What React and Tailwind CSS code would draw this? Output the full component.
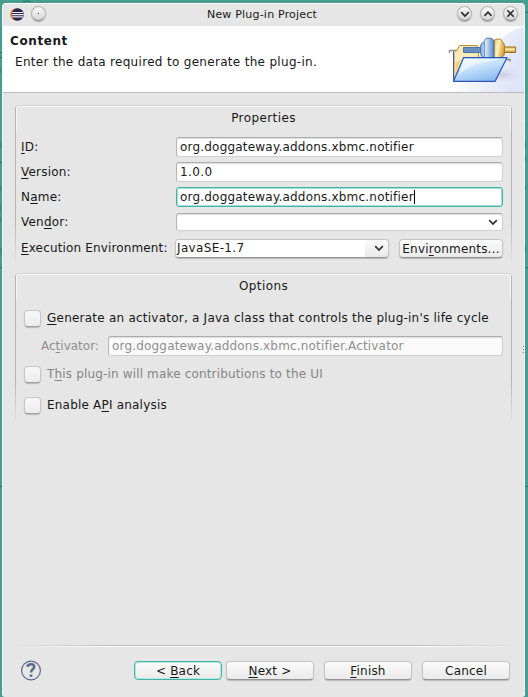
import React from 'react';

const U = ({ children }) => (
  <span className="underline decoration-1 underline-offset-2">{children}</span>
);

const Chevron = ({ up, className = '' }) => (
  <svg className={className} width="10" height="8" viewBox="0 0 10 8" fill="none">
    <path d={up ? 'M1.5 5.8 5 2.2l3.5 3.6' : 'M1.2 2.2 5 6l3.8-3.8'} stroke="#303030" strokeWidth="1.7" />
  </svg>
);

const Round = ({ children }) => (
  <span className="flex h-[15px] w-[15px] items-center justify-center rounded-full border border-[#b4b4b4] border-b-[#8e8e8e] bg-linear-to-b from-[#fafafa] to-[#d6d6d6] shadow-[0_1px_1px_#aaa]">
    {children}
  </span>
);

const field =
  'flex h-5 w-[327px] items-center whitespace-nowrap rounded-[3px] border border-[#d0d0d0] border-t-[#adadad] border-l-[#b5b5b5] bg-white pl-[3px] shadow-[inset_0_1px_1px_#ddd]';
const raised =
  'flex items-center justify-center whitespace-nowrap rounded-[4px] border border-[#c4c4c4] border-b-[#929292] bg-linear-to-b from-[#fbfbfb] to-[#eaeaea] shadow-[0_1px_1px_#b8b8b8]';

const Row = ({ label, className = '', children }) => (
  <div className={`flex h-5 items-center ${className}`}>
    <span className="w-[155px] shrink-0 whitespace-nowrap">{label}</span>
    {children}
  </div>
);

// Group frame whose side edges fade out towards the bottom.
const Group = ({ title, className, children }) => (
  <section className={`relative left-[-1px] ml-[13px] w-[497px] ${className}`}>
    <div className="absolute inset-0 rounded-t-[4px] border-x border-t border-x-[#b4b4b4] border-t-[#d2d2d2] mask-b-from-70% shadow-[inset_0_1px_0_#fafafa]" />
    <div className="absolute top-[2px] left-px h-[24px] w-[495px] border-x border-[#f7f7f7]" />
    <div className="relative">
      <h2 className="flex h-[25px] items-center justify-center pt-px text-center tracking-[0.4px]">{title}</h2>
      {children}
    </div>
  </section>
);

const Check = ({ children, className = '' }) => (
  <label className={`ml-[9px] flex h-[17px] items-center whitespace-nowrap ${className}`}>
    <span className="mr-[6px] h-[17px] w-[17px] rounded-[4px] border border-[#c6c6c6] border-b-[#a0a0a0] bg-linear-to-b from-[#f8f8f8] to-[#ececec] shadow-[0_1px_1px_#bbb]" />
    <span className="relative -top-px">{children}</span>
  </label>
);

const FolderPlug = () => (
  <svg width="80" height="66" viewBox="0 0 80 66">
    <defs>
      <linearGradient id="sky" x1="0" x2="1" y1="0" y2=".3">
        <stop offset=".2" stopColor="#fff" /><stop offset="1" stopColor="#dfe5f8" />
      </linearGradient>
      <linearGradient id="front" x1="0" x2=".5" y1="0" y2="1">
        <stop stopColor="#f0faff" /><stop offset=".5" stopColor="#c5e2fb" /><stop offset="1" stopColor="#8fbdf2" />
      </linearGradient>
      <linearGradient id="gold" x1="0" x2="1" y1="0" y2=".3">
        <stop stopColor="#e6bb58" /><stop offset=".45" stopColor="#fff3bd" /><stop offset="1" stopColor="#d3a23c" />
      </linearGradient>
      <linearGradient id="rod" x1="0" x2="0" y1="0" y2="1">
        <stop stopColor="#e0b65a" /><stop offset=".45" stopColor="#fbe9a8" /><stop offset="1" stopColor="#c08e2c" />
      </linearGradient>
      <linearGradient id="steel" x1="0" x2="1" y1="0" y2="0">
        <stop stopColor="#7fa5d3" /><stop offset=".4" stopColor="#d3e6f6" /><stop offset="1" stopColor="#5b86be" />
      </linearGradient>
      <radialGradient id="shade"><stop stopColor="#b8b3ce" stopOpacity=".6" /><stop offset="1" stopColor="#d5d8ed" stopOpacity="0" /></radialGradient>
    </defs>
    <path d="M80 1C66 4 57 12 46 21 31 32 20 49 10 66H80Z" fill="url(#sky)" />
    <ellipse cx="59" cy="49" rx="17" ry="8" fill="url(#shade)" />
    <path d="M5 24.500h7M5.500 24v3M62 33.500h4v2M16 33.500h3" stroke="#888b96" strokeWidth="1.4" fill="none" />
    <path d="M9.500 55V25h3l3-5.500h18l1 2v32Z" fill="#fbe9b8" stroke="#b58b36" />
    <path d="M9.700 55V26" stroke="#45558f" strokeWidth="1.2" />
    <path d="M11.500 49V37l5-3Z" fill="#f9cf75" />
    <path d="M19.500 21.500h17v5h-17Z" fill="#6b90c4" stroke="#4a72ac" />
    <path d="M59.500 21h12v5.500h-12Z" fill="url(#rod)" stroke="#9d6b16" />
    <path d="M50 14.500q1-1.500 4-1.500t4 1.700v1.500q2.500.3 2.500 4v7q0 3-2.500 3.600V32h-8Z" fill="url(#gold)" stroke="#b07d1b" />
    <path d="M36.500 21.500q0-5 3.500-5 .3-4.500 4.700-4.500t5.300 3V32h-9.500q-4-1-4-5Z" fill="url(#steel)" stroke="#4a77b3" />
    <path d="M40.500 17v14" stroke="#5b86be" strokeWidth=".8" />
    <path d="M19.500 31.700H63L51 55.300H9.500Z" fill="url(#front)" stroke="#2855b6" strokeWidth="1.2" />
    <path d="M20.500 33h39C44 35 22 38 14 51Z" fill="#fff" opacity=".5" />
  </svg>
);

const wizardButton = `${raised} h-[19px] w-[88px]`;

export default function App() {
  return (
    <div className="relative h-[697px] w-[528px] overflow-hidden bg-[#469e91] pt-[3px] pl-[2px] font-['DejaVu_Sans',sans-serif] text-[12px] leading-[16px] tracking-[0.2px] text-[#181818]">
      {/* Slivers of the window behind the dialog */}
      <svg className="absolute top-0 left-0" width="528" height="697" stroke="#23776c">
        <path d="M0 52.500h2M0 57.500h2M0 162.500h2M0 267.500h2M0 486.500h2M525 12.500h3M525 125.500h1M525 267.500h3M525 486.500h3M23 2.500l4-2 4 2" fill="none" />
        <path d="M1 68v5M1 142v6M1 186v5M1 205v6M1 217v5M1 248v7M525.500 142v7M525.500 157v4M525.500 186v3M525.500 246v7" opacity=".7" />
      </svg>
      <main className="relative flex h-[694px] w-[523px] flex-col rounded-t-[4px] rounded-b-[3px] border border-t-white border-r-[#f8f8f8] border-b-[#e6e6e6] border-l-[#f5f5f5] bg-[#e6e6e6]">
        <header className="flex h-[22px] shrink-0 items-center pr-[6px] pl-[7px] text-[11px]">
          <svg width="14" height="14" viewBox="0 0 14 14">
            <circle cx="6.3" cy="6.5" r="6.2" fill="#f59222" />
            <circle cx="7.6" cy="6.5" r="6.2" fill="#2c2255" />
            <path d="M2 4.500h11M1.600 6.700h12M2 8.900h11" stroke="#eee" strokeWidth="1.2" />
          </svg>
          <span className="mb-[3px] ml-[7px]"><Round><i className="h-px w-px bg-[#333]" /></Round></span>
          <h1 className="flex-1 pl-[21px] text-center">New Plug-in Project</h1>
          <div className="mb-[3px] flex gap-2">
            <Round><Chevron /></Round>
            <Round><Chevron up /></Round>
            <Round>
              <svg width="9" height="9" viewBox="0 0 9 9"><path d="m1.3 1.3 6.4 6.4m0-6.4L1.3 7.7" stroke="#303030" strokeWidth="1.6" /></svg>
            </Round>
          </div>
        </header>
        <div className="flex h-[67px] shrink-0 justify-between border-b border-[#bdbdbd] bg-white">
          <div className="pt-[7px] pl-[7px]">
            <h2 className="font-bold tracking-[0.6px]">Content</h2>
            <p className="mt-[5px] ml-[5px] tracking-[0.31px]">Enter the data required to generate the plug-in.</p>
          </div>
          <FolderPlug />
        </div>

        <Group title="Properties" className="mt-[12px] h-[162px]">
          <div className="mt-[7px] flex flex-col gap-[5px] pl-[6px]">
            <Row label={<><U>I</U>D:</>}><div className={field}>org.doggateway.addons.xbmc.notifier</div></Row>
            <Row label={<><U>V</U>ersion:</>}><div className={field}><span className="tracking-[0.4px]">1.0.0</span></div></Row>
            <Row label={<>N<U>a</U>me:</>}>
              <div className="flex h-5 w-[327px] items-center rounded-[3px] border border-[#40b5a7] bg-white pl-[3px] whitespace-nowrap shadow-[inset_0_0_0_1px_#a5e0d8]">
                org.doggateway.addons.xbmc.notifier<i className="h-[14px] w-px bg-black" />
              </div>
            </Row>
            <Row label={<>Ven<U>d</U>or:</>}>
              <div className={`${field} h-[18px]! justify-end pr-1`}><Chevron /></div>
            </Row>
            <Row label={<span className="tracking-[0.15px]"><U>E</U>xecution Environment:</span>} className="mt-px">
              <div className={`${raised} -ml-px h-[19px] w-[214px] justify-between! pr-1`}>
                <span className="flex h-[17px] w-[189px] items-center rounded-l-[3px] bg-white pl-px tracking-[0.35px]">JavaSE-1.7</span><Chevron />
              </div>
              <button className={`${raised} ml-[10px] h-[19px] w-[104px] pt-px`}><span>Envi<U>r</U>onments...</span></button>
            </Row>
          </div>
        </Group>

        <Group title="Options" className="mt-[6px] h-[152px]">
          <Check className="mt-[12px] tracking-[0.23px]"><U>G</U>enerate an activator, a Java class that controls the plug-in's life cycle</Check>
          <div className="mt-[9px] flex h-5 items-center text-[#8e8e8e]">
            <span className="ml-[26px] w-[67px] tracking-normal">Ac<U>t</U>ivator:</span>
            <div className={`${field} w-[395px]! bg-[#fafafa]!`}><span className="tracking-[0.18px]">org.doggateway.addons.xbmc.notifier.Activator</span></div>
          </div>
          <Check className="mt-[10px] tracking-[0.16px] text-[#858585]">T<U>h</U>is plug-in will make contributions to the UI</Check>
          <Check className="mt-[14px]">Enable A<U>P</U>I analysis</Check>
        </Group>

        <footer className="mt-auto">
          <div className="mx-2 h-[2px] border-b border-white bg-[#bdbdbd] mask-x-from-80%" />
          <div className="flex h-[49px] items-center pb-[2px] pl-[17px]">
            <svg className="mr-[92px]" width="22" height="22" viewBox="0 0 22 22" fill="none" stroke="#586a8c">
              <circle cx="11" cy="10.500" r="9.400" strokeWidth="1.2" />
              <path d="M7.300 6.700C8 3.300 14.200 3.300 14.200 6.700 14.200 9.300 11 9.200 11 12.500" strokeWidth="2.5" />
              <path d="M11 14.500v2.300" strokeWidth="2.6" />
            </svg>
            <button className={`${wizardButton} border-[#40b5a7]! shadow-[inset_0_0_0_1px_#b8e6e0]!`}><span>&lt; <U>B</U>ack</span></button>
            <button className={`${wizardButton} ml-1`}><span><U>N</U>ext &gt;</span></button>
            <button className={`${wizardButton} ml-[10px]`}><span><U>F</U>inish</span></button>
            <button className={`${wizardButton} ml-[10px]`}>Cancel</button>
          </div>
        </footer>
        <span className="absolute top-[342px] right-0 flex flex-col gap-[2px]">
          <i className="h-px w-px bg-[#777]" /><i className="h-px w-px bg-[#777]" /><i className="h-px w-px bg-[#777]" />
        </span>
      </main>
    </div>
  );
}
